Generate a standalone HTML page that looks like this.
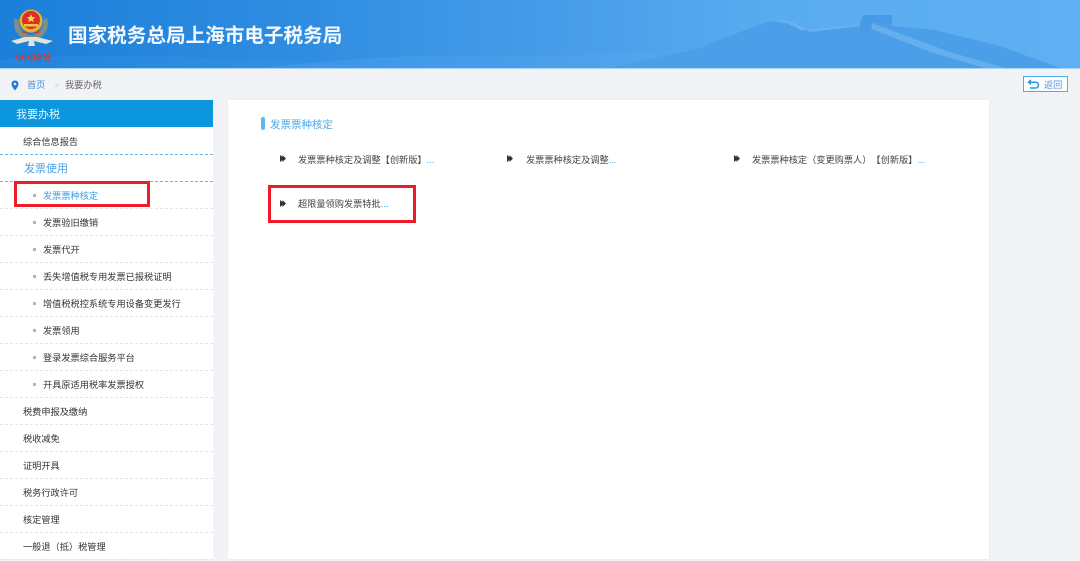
<!DOCTYPE html>
<html lang="zh"><head><meta charset="utf-8">
<style>
html,body{margin:0;padding:0;width:1080px;height:559px;overflow:hidden;background:#f1f3f7;font-family:"Liberation Sans","Noto Sans CJK SC",sans-serif;text-spacing-trim:space-all}
.a{position:absolute;white-space:nowrap}
#hd{position:absolute;left:0;top:0;width:1080px;height:68px;background:linear-gradient(90deg,#1b7fd9 0%,#2f8de1 28%,#4a9fea 55%,#5aacf0 72%,#5fb0f3 100%);overflow:hidden}
#bar{position:absolute;left:0;top:68px;width:1080px;height:1px;background:#a9d3f3}
#side{position:absolute;left:0;top:100px;width:213px;height:459px;background:#fff}
#main{position:absolute;left:228px;top:100px;width:761px;height:459px;background:#fff;box-shadow:0 0 2px #e4e6ea}
.r{position:absolute;left:0;width:213px;height:26px;line-height:28px;font-size:9.2px;color:#333;border-bottom:1px dashed #e6e6e6;white-space:nowrap}
.r span{position:absolute}
.l1 span{left:23px}
.l2 span{left:43px}
.l2:before{content:"";position:absolute;left:33px;top:12px;width:3px;height:3px;background:#b5b5b5}
.lk{position:absolute;font-size:9.2px;color:#444;white-space:nowrap;line-height:14px}
.lk i{font-style:normal;color:#3a9fe0}
.tri{position:absolute}
.red{position:absolute;border:3px solid #ec1c2b;box-sizing:border-box}
</style></head><body>
<div id="hd">
<svg class="a" style="left:0;top:0" width="1080" height="68" viewBox="0 0 1080 68">
<path d="M0 68 L0 60 C120 50 260 60 400 68Z" fill="#3e97e4" opacity=".25"/>
<path d="M260 68 C340 60 400 54 480 56 C560 58 640 52 700 48 L640 68Z" fill="#58a8ee" opacity=".3"/>
<path d="M610 68 L700 48 L745 30 L770 21 L790 24 L805 30 L860 24 L863 15 L892 15 L892 26 L935 30 L1000 46 L1060 68Z" fill="#4a9fe8"/>
<path d="M770 21 C780 19 790 24 802 31 L806 29 C795 22 785 19 770 21Z M805 30 L860 24 L860 26 L810 32Z" fill="#6bb2ee"/>
<path d="M872 23 L950 52 L1005 68 L985 68 L930 52 L872 29Z" fill="#66aeec"/>
<path d="M860 24 L863 15 L892 15 L892 24 L872 22 L868 32 L860 32Z" fill="#469be4"/>
</svg>
<svg class="a" style="left:8px;top:8px" width="46" height="56" viewBox="0 0 46 56">
<path d="M7 10 C4 20 9 28 17 31 L29 31 C37 28 42 20 39 10 L35 12 C36 20 32 25 25 27 L21 27 C14 25 10 20 11 12Z" fill="#7f8f88"/>
<path d="M3 33 L17 29 L29 29 L45 33 L38 36 L26 33 L27 38 L20 38 L21 33 L9 36Z" fill="#dfe4de"/>
<circle cx="23" cy="13" r="11.500" fill="#e8b32c"/>
<circle cx="23" cy="12" r="9" fill="#d8312c"/>
<path d="M23 6 l1.300 3 3 .3 -2.300 1.900 .8 3 -2.800 -1.600 -2.800 1.600 .8 -3 -2.300 -1.900 3 -.3Z" fill="#f5d24a"/>
<rect x="16" y="16" width="14" height="2.500" fill="#f0c93e"/>
<path d="M15 22 C18 26 28 26 31 22 L31 25 L15 25Z" fill="#c8382c"/>
<text x="7" y="53" font-size="9" font-weight="bold" fill="#d8362c" font-family="'Noto Serif CJK SC',serif">中国税务</text>
</svg>
<div class="a" style="left:68px;top:24px;font-size:19.600px;line-height:24px;font-weight:bold;color:#f2f8fd">国家税务总局上海市电子税务局</div>
</div>
<div id="bar"></div>

<svg class="a" style="left:11px;top:80px" width="8" height="11" viewBox="0 0 8 11"><path fill-rule="evenodd" d="M4 0.500 C1.800 .5 .5 2 .5 4 C.5 6.500 4 10.500 4 10.500 C4 10.500 7.500 6.500 7.500 4 C7.500 2 6.200 .5 4 .5Z M4 2.700 A1.300 1.300 0 1 1 3.990 2.700Z" fill="#1f7fd6"/></svg>
<div class="a" style="left:27px;top:79px;font-size:9.200px;line-height:13px;color:#4b8fdc">首页</div>
<div class="a" style="left:54px;top:79px;font-size:8px;line-height:13px;color:#ccc">&gt;</div>
<div class="a" style="left:65px;top:79px;font-size:9.200px;line-height:13px;color:#666">我要办税</div>

<div class="a" style="left:1023px;top:76px;width:45px;height:16px;box-sizing:border-box;border:1px solid #4fadec;background:#fbfdff"></div>
<svg class="a" style="left:1027px;top:79px" width="13" height="11" viewBox="0 0 13 11"><path d="M4 1 L1.500 3.200 L4 5.400 M1.500 3.200 H8.500 C10.500 3.200 11.500 4.500 11.500 6 C11.500 7.800 10.300 9 8.500 9 H3" fill="none" stroke="#2a9ae0" stroke-width="1.500"/></svg>
<div class="a" style="left:1044px;top:79px;font-size:9.200px;line-height:12px;color:#5f96dc">返回</div>

<div id="side">
<div style="position:absolute;left:0;top:0;width:213px;height:27px;background:#0b96dd;color:#e8f5fc;font-size:11px;line-height:30px;text-indent:16px">我要办税</div>
<div class="r l1" style="top:28px;border-bottom-color:#6fb8e6"><span>综合信息报告</span></div>
<div class="r l1" style="top:55px;border-bottom-color:#6fb8e6;color:#4aa3e4;font-size:11px"><span style="left:24px">发票使用</span></div>
<div class="r l2" style="top:82px;color:#3a9fe6"><span>发票票种核定</span></div>
<div class="r l2" style="top:109px"><span>发票验旧缴销</span></div>
<div class="r l2" style="top:136px"><span>发票代开</span></div>
<div class="r l2" style="top:163px"><span>丢失增值税专用发票已报税证明</span></div>
<div class="r l2" style="top:190px"><span>增值税税控系统专用设备变更发行</span></div>
<div class="r l2" style="top:217px"><span>发票领用</span></div>
<div class="r l2" style="top:244px"><span>登录发票综合服务平台</span></div>
<div class="r l2" style="top:271px"><span>开具原适用税率发票授权</span></div>
<div class="r l1" style="top:298px"><span>税费申报及缴纳</span></div>
<div class="r l1" style="top:325px"><span>税收减免</span></div>
<div class="r l1" style="top:352px"><span>证明开具</span></div>
<div class="r l1" style="top:379px"><span>税务行政许可</span></div>
<div class="r l1" style="top:406px"><span>核定管理</span></div>
<div class="r l1" style="top:433px"><span>一般退（抵）税管理</span></div>
</div>
<div class="red" style="left:14px;top:181px;width:136px;height:26px"></div>

<div id="main"></div>
<div class="a" style="left:261px;top:117px;width:4px;height:13px;border-radius:2px;background:#5db7f0"></div>
<div class="a" style="left:270px;top:117px;font-size:10.500px;line-height:16px;color:#4aa8e8">发票票种核定</div>

<svg class="tri" style="left:280px;top:155px" width="6" height="7"><path d="M0 0 L2.500 2 V0 L6 3.500 L2.500 7 V5 L0 7Z" fill="#333"/></svg>
<div class="lk" style="left:298px;top:153px">发票票种核定及调整【创新版】<i>...</i></div>
<svg class="tri" style="left:507px;top:155px" width="6" height="7"><path d="M0 0 L2.500 2 V0 L6 3.500 L2.500 7 V5 L0 7Z" fill="#333"/></svg>
<div class="lk" style="left:526px;top:153px">发票票种核定及调整<i>...</i></div>
<svg class="tri" style="left:734px;top:155px" width="6" height="7"><path d="M0 0 L2.500 2 V0 L6 3.500 L2.500 7 V5 L0 7Z" fill="#333"/></svg>
<div class="lk" style="left:752px;top:153px">发票票种核定（变更购票人）【创新版】<i>...</i></div>
<svg class="tri" style="left:280px;top:200px" width="6" height="7"><path d="M0 0 L2.500 2 V0 L6 3.500 L2.500 7 V5 L0 7Z" fill="#333"/></svg>
<div class="lk" style="left:298px;top:197px">超限量领购发票特批<i>...</i></div>
<div class="red" style="left:268px;top:185px;width:148px;height:38px"></div>
</body></html>
